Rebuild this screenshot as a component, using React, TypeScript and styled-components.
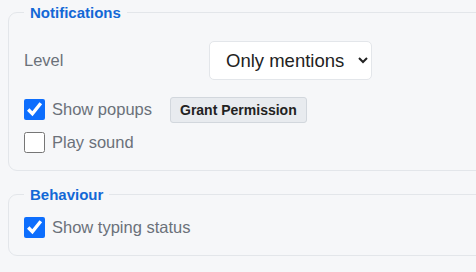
import styled, { createGlobalStyle } from "styled-components";

const GlobalStyle = createGlobalStyle`
    html, body {
        margin: 0;
        background: #f6f7f9;
        overflow: hidden;
    }
    body {
        font-family: "Liberation Sans", Arial, sans-serif;
    }
`;

function App() {
    return (
        <>
            <GlobalStyle />
            <SettingsStyle>
                <Section>
                    <Legend>Notifications</Legend>
                    <Body>
                        <LevelRow>
                            <Label>Level</Label>
                            <Select defaultValue="mentions">
                                <option value="all">All messages</option>
                                <option value="mentions">Only mentions</option>
                                <option value="none">Nothing</option>
                            </Select>
                        </LevelRow>
                        <CheckRow>
                            <Check type="checkbox" defaultChecked />
                            <Label>Show popups</Label>
                            <SmallButton>Grant Permission</SmallButton>
                        </CheckRow>
                        <CheckRow>
                            <Check type="checkbox" />
                            <Label>Play sound</Label>
                        </CheckRow>
                    </Body>
                </Section>

                <Section>
                    <Legend>Behaviour</Legend>
                    <Body>
                        <CheckRow>
                            <Check type="checkbox" defaultChecked />
                            <Label>Show typing status</Label>
                        </CheckRow>
                    </Body>
                </Section>
            </SettingsStyle>
        </>
    );
}

// the panels are wider than the window, their right edge is cut off
const SettingsStyle = styled.div`
    padding: 4px 0 0 8px;
    display: flex;
    flex-direction: column;
    gap: 15px;
`;

const Section = styled.fieldset`
    width: 540px;
    margin: 0;
    padding: 0 15px 11px;
    border: 1px solid #e3e6ea;
    border-radius: 9px;
    box-sizing: border-box;
`;

const Legend = styled.legend`
    padding: 0 6px;
    font-size: 15px;
    line-height: 17px;
    font-weight: bold;
    color: #1368d6;
`;

const Body = styled.div`
    padding-top: 8px;
`;

const LevelRow = styled.div`
    display: grid;
    grid-template-columns: 185px 163px;
    align-items: center;
    padding: 12px 0 13px;
`;

const CheckRow = styled.label`
    display: flex;
    align-items: center;
    height: 33px;
`;

const Label = styled.span`
    font-size: 16.5px;
    color: #6b717a;
`;

const Select = styled.select`
    height: 39px;
    padding: 0 8px 0 12px;
    font-family: "Liberation Sans", Arial, sans-serif;
    font-size: 18.5px;
    color: #222;
    background: #fff;
    border: 1px solid #e3e6ea;
    border-radius: 5px;
`;

const Check = styled.input`
    width: 21px;
    height: 21px;
    margin: 0 7px 0 0;
    accent-color: #0d6efd;
`;

const SmallButton = styled.button`
    margin-left: 18px;
    height: 26px;
    padding: 0 9px;
    font-family: "Liberation Sans", Arial, sans-serif;
    font-size: 14px;
    font-weight: bold;
    color: #222;
    background: #e8ebef;
    border: 1px solid #d2d7dd;
    border-radius: 3px;
`;

export default App;
